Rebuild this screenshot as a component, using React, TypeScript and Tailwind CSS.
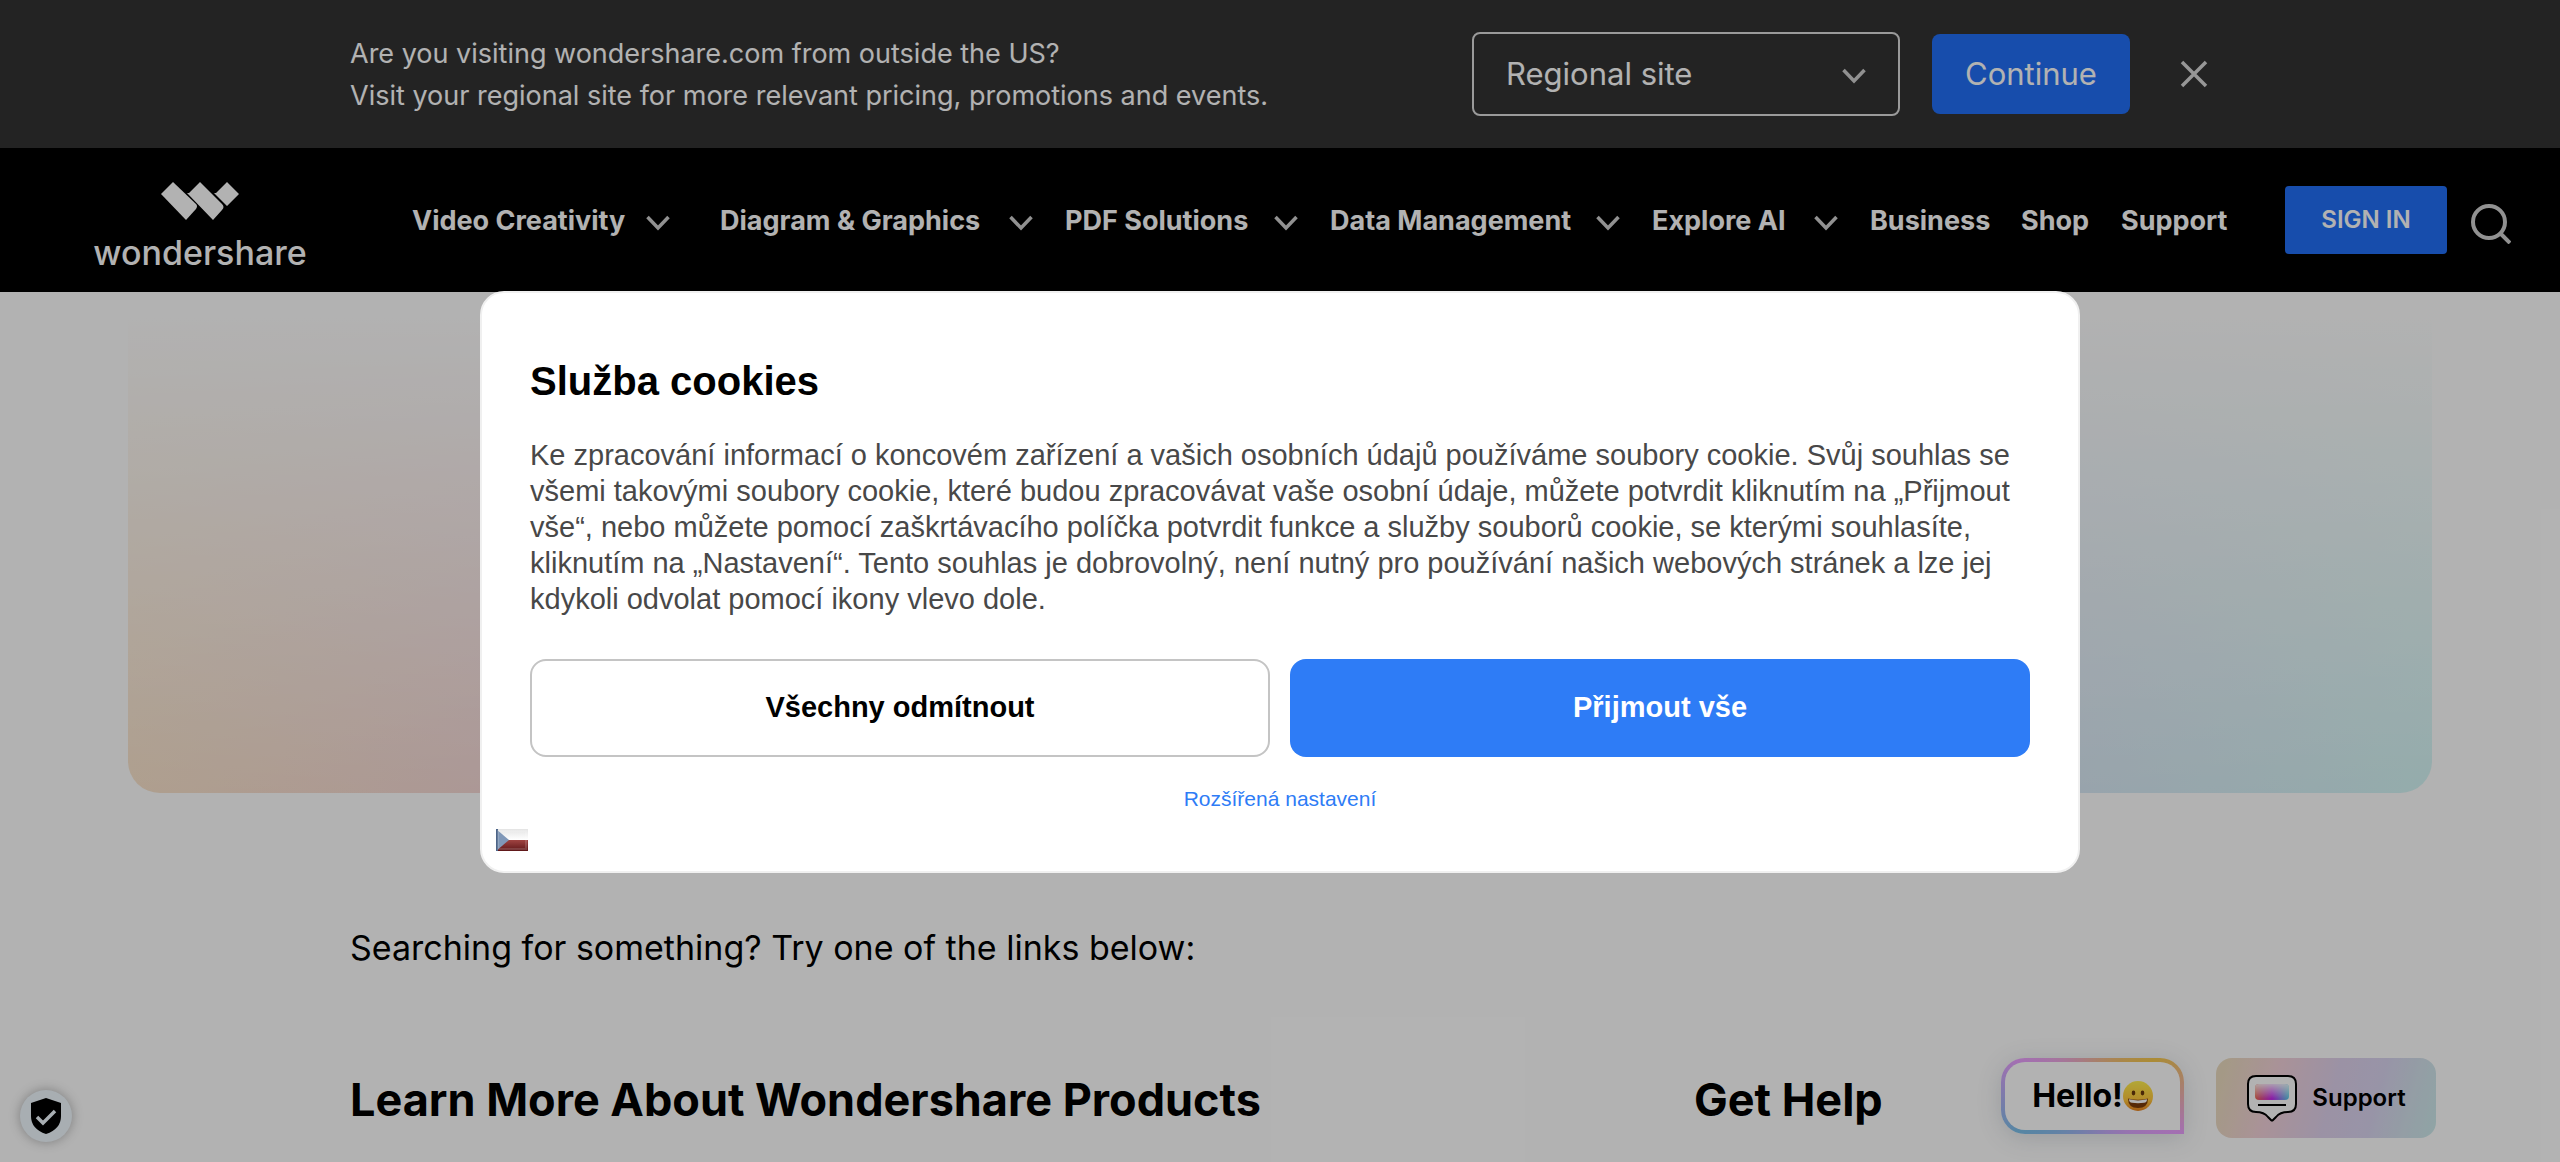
import React from "react";

const menuItems = [
  { label: "Video Creativity", dropdown: true, layout: "w-[258px] mr-[18px]" },
  { label: "Diagram & Graphics", dropdown: true, layout: "w-[313px]" },
  { label: "PDF Solutions", dropdown: true, layout: "w-[233px]" },
  { label: "Data Management", dropdown: true, layout: "w-[290px]" },
  { label: "Explore AI", dropdown: true, layout: "w-[186px]" },
  { label: "Business", dropdown: false, layout: "w-[119px]" },
  { label: "Shop", dropdown: false, layout: "w-[68px]" },
  { label: "Support", dropdown: false, layout: "w-[108px]" },
];

function Chevron({ className = "" }: { className?: string }) {
  return (
    <svg className={className} width="24" height="16" viewBox="0 0 24 16" fill="none" stroke="currentColor" strokeWidth="3.5" aria-hidden="true">
      <path d="M1.5 2L12 13 22.5 2" />
    </svg>
  );
}

function RegionBanner() {
  return (
    <section className="flex h-[148px] items-center bg-[#333333] pl-[350px] text-white" aria-label="Regional site">
      <p className="w-[1122px] pt-0.5 text-[27px] leading-[42px] whitespace-nowrap">
        Are you visiting wondershare.com from outside the US?
        <br />
        Visit your regional site for more relevant pricing, promotions and events.
      </p>
      <div className="relative w-[428px] shrink-0">
        <select aria-label="Regional site" className="h-[84px] w-full appearance-none rounded-lg border-2 border-[#dddddd] bg-transparent pl-8 text-[31px]">
          <option>Regional site</option>
        </select>
        <Chevron className="pointer-events-none absolute top-[36px] right-[34px] text-[#d0d0d0]" />
      </div>
      <button className="ml-8 h-20 w-[198px] shrink-0 rounded-lg bg-[#226ff6] text-[31px]">Continue</button>
      <button aria-label="Close" className="ml-[50px] text-[#d8d8d8]">
        <svg width="28" height="28" viewBox="0 0 28 28" fill="none" stroke="currentColor" strokeWidth="3.5">
          <path d="M2 2l24 24M26 2L2 26" />
        </svg>
      </button>
    </section>
  );
}

function Logo() {
  return (
    <a href="#" aria-label="Wondershare" className="mt-3 flex w-[210px] shrink-0 flex-col items-center gap-4 text-white">
      <svg width="78" height="38" viewBox="0 0 78 38" fill="currentColor" aria-hidden="true">
        <path d="M0 12L12 0l23 22q2 2 0 5L25 38z" />
        <path d="M26 11h2L39 0l22 22q3 3 0 6L52 38z" />
        <path d="M53 11h2L66 0l12 12-12 12z" />
      </svg>
      <span className="text-[34px] leading-[34px] font-medium">wondershare</span>
    </a>
  );
}

function Navigation() {
  return (
    <header className="flex h-36 items-center bg-black pl-[95px] text-white">
      <Logo />
      <nav className="ml-[107px] flex gap-8 pt-0.5 text-[27px] font-bold whitespace-nowrap">
        {menuItems.map((item) => (
          <a key={item.label} href="#" className={`flex shrink-0 items-center justify-between ${item.layout}`}>
            {item.label}
            {item.dropdown && <Chevron className="mt-1 text-[#d0d0d0]" />}
          </a>
        ))}
      </nav>
      <button className="ml-14 h-[68px] w-[162px] shrink-0 rounded-sm bg-[#226ff6] text-2xl font-semibold">SIGN IN</button>
      <button aria-label="Search" className="mt-2 ml-6 text-[#d0d0d0]">
        <svg width="40" height="40" viewBox="0 0 40 40" fill="none" stroke="currentColor" strokeWidth="4">
          <circle cx="18" cy="18" r="16" />
          <path d="M30 30l9 9" />
        </svg>
      </button>
    </header>
  );
}

function Emoji() {
  return (
    <svg className="shrink-0" width="30" height="30" viewBox="0 0 30 30" role="img" aria-label="Grinning face">
      <defs>
        <linearGradient id="face" x1="0" y1="0" x2="0" y2="1">
          <stop offset="0" stopColor="#fff04f" />
          <stop offset="0.65" stopColor="#ffc53b" />
          <stop offset="1" stopColor="#e8821e" />
        </linearGradient>
      </defs>
      <circle cx="15" cy="15" r="15" fill="url(#face)" />
      <ellipse cx="10.5" cy="12" rx="1.8" ry="2.4" fill="#6b3a0c" />
      <ellipse cx="19.5" cy="12" rx="1.8" ry="2.4" fill="#6b3a0c" />
      <path d="M5 17.5Q15 20 25 17.5 25 27 15 27T5 17.5z" fill="#7c3c0b" />
      <path d="M6 18.3Q15 20.5 24 18.3q0 3.2-3 3.5-6 .8-12 0-3-.3-3-3.5z" fill="#fff" />
    </svg>
  );
}

function SupportIcon() {
  return (
    <svg width="52" height="48" viewBox="0 0 52 48" aria-hidden="true">
      <defs>
        <linearGradient id="screen" x1="0" y1="0" x2="1" y2="0">
          <stop offset="0" stopColor="#f06a4e" />
          <stop offset="0.5" stopColor="#c52af0" />
          <stop offset="1" stopColor="#5bd0e8" />
        </linearGradient>
        <linearGradient id="screenFade" x1="0" y1="0" x2="0" y2="1">
          <stop offset="0" stopColor="#fff" stopOpacity="0.85" />
          <stop offset="0.9" stopColor="#fff" stopOpacity="0" />
        </linearGradient>
      </defs>
      <path d="M10 2h32q8 0 8 8v20q0 8-8 8-8 0-12 5l-3 3q-1 1-2 0l-3-3q-4-5-12-5-8 0-8-8V10q0-8 8-8z" fill="#fff" stroke="#000" strokeWidth="2" />
      <rect x="9" y="10" width="34" height="16" rx="4" fill="url(#screen)" />
      <rect x="9" y="10" width="34" height="16" rx="4" fill="url(#screenFade)" />
      <path d="M12 31h28" stroke="#000" strokeWidth="2" />
    </svg>
  );
}

function ChatWidget() {
  return (
    <aside className="absolute right-[124px] bottom-6 flex h-20 items-start gap-8">
      <div className="h-[76px] w-[183px] rounded-t-3xl rounded-bl-3xl bg-[conic-gradient(from_60deg,#f5c84e,#eaa0ff_53deg,#7cc0ea_185deg,#eaa0ff_235deg,#f5c84e)] p-1 shadow-[0_4px_24px_rgba(60,80,100,0.18)]">
        <button className="flex h-full w-full items-center justify-center rounded-t-[20px] rounded-bl-[20px] bg-white text-[32px] font-bold text-black">
          Hello!
          <Emoji />
        </button>
      </div>
      <button className="flex h-20 w-[220px] items-center justify-center gap-[14px] rounded-2xl bg-[linear-gradient(105deg,#ebdcc0_4%,#f3d2da_27%,#dfd2ec_52%,#dad4f0_70%,#d4e2ec_86%,#cdecec)] text-2xl font-semibold text-black">
        <SupportIcon />
        Support
      </button>
    </aside>
  );
}

function CookieDialog() {
  return (
    <section
      role="dialog"
      aria-labelledby="cookie-title"
      className="absolute inset-x-0 top-[291px] mx-auto w-[1600px] max-w-full rounded-3xl border-2 border-[#f0f0f0] bg-white px-12 pt-[62px] pb-5 font-['Liberation_Sans',Arial,sans-serif]"
    >
      <h2 id="cookie-title" className="text-[40px] leading-[52px] font-bold text-black">Služba cookies</h2>
      <p className="mt-[30px] text-[29px] leading-9 whitespace-nowrap text-[#484848]">
        Ke zpracování informací o koncovém zařízení a vašich osobních údajů používáme soubory cookie. Svůj souhlas se
        <br />
        všemi takovými soubory cookie, které budou zpracovávat vaše osobní údaje, můžete potvrdit kliknutím na „Přijmout
        <br />
        vše“, nebo můžete pomocí zaškrtávacího políčka potvrdit funkce a služby souborů cookie, se kterými souhlasíte,
        <br />
        kliknutím na „Nastavení“. Tento souhlas je dobrovolný, není nutný pro používání našich webových stránek a lze jej
        <br />
        kdykoli odvolat pomocí ikony vlevo dole.
      </p>
      <div className="mt-[42px] grid grid-cols-2 gap-5 text-[29px] font-bold">
        <button className="h-[98px] rounded-2xl border-2 border-[#c4c4c4] text-black">Všechny odmítnout</button>
        <button className="h-[98px] rounded-2xl bg-[#2e7cf6] text-white">Přijmout vše</button>
      </div>
      <a href="#" className="mx-auto mt-[26px] block w-fit text-[21px] leading-8 text-[#2e7cf6]">Rozšířená nastavení</a>
      <button aria-label="Čeština" className="mt-[14px] -ml-[34px] block">
        <svg width="32" height="22" viewBox="0 0 32 22">
          <defs>
            <linearGradient id="flagRed" x1="0" y1="0" x2="0" y2="1">
              <stop offset="0" stopColor="#a04442" />
              <stop offset="1" stopColor="#5e1618" />
            </linearGradient>
            <linearGradient id="flagWhite" x1="0" y1="0" x2="0" y2="1">
              <stop offset="0" stopColor="#e4e4e4" />
              <stop offset="1" stopColor="#ffffff" />
            </linearGradient>
          </defs>
          <path d="M0 0h32v11H0z" fill="url(#flagWhite)" />
          <path d="M0 11h32v11H0z" fill="url(#flagRed)" />
          <path d="M0 0l13 11L0 22z" fill="#8098b8" />
          <path d="M0 0h2v22H0z" fill="#4c6488" />
          <path d="M2 2h28v18H2z" fill="none" stroke="#fff" strokeOpacity="0.15" strokeWidth="2" />
        </svg>
      </button>
    </section>
  );
}

export default function App() {
  return (
    <div className="relative h-screen overflow-hidden bg-white font-['Inter',sans-serif]">
      <RegionBanner />
      <Navigation />
      <main>
        <div className="mx-32 h-[501px] rounded-b-[32px] bg-[linear-gradient(180deg,#fff_5%,rgba(255,255,255,0)_110%),linear-gradient(90deg,#fae1c6,#f4d2d6_20%,#e8d4f0_50%,#d8e4f6_80%,#d0f6f6)]" />
        <p className="mt-[128px] px-[350px] text-[34px] leading-[54px] text-black">Searching for something? Try one of the links below:</p>
        <div className="mt-[93px] flex px-[350px] text-[45px] leading-[64px] font-bold whitespace-nowrap text-black">
          <h2 className="w-[1344px]">Learn More About Wondershare Products</h2>
          <h2>Get Help</h2>
        </div>
      </main>
      <ChatWidget />
      <button aria-label="Privacy settings" className="absolute bottom-5 left-5 flex size-[52px] items-center justify-center rounded-full bg-[#f1f9ff] shadow-[0_0_12px_rgba(0,0,0,0.3)]">
        <svg width="30" height="36" viewBox="0 0 30 36">
          <path d="M15 0l15 5v13q0 13-15 18Q0 31 0 18V5z" fill="#000" />
          <path d="M6 19l6 6 12-12" fill="none" stroke="#f1f9ff" strokeWidth="3.5" />
        </svg>
      </button>
      <div className="absolute inset-0 bg-black/30" />
      <CookieDialog />
    </div>
  );
}
